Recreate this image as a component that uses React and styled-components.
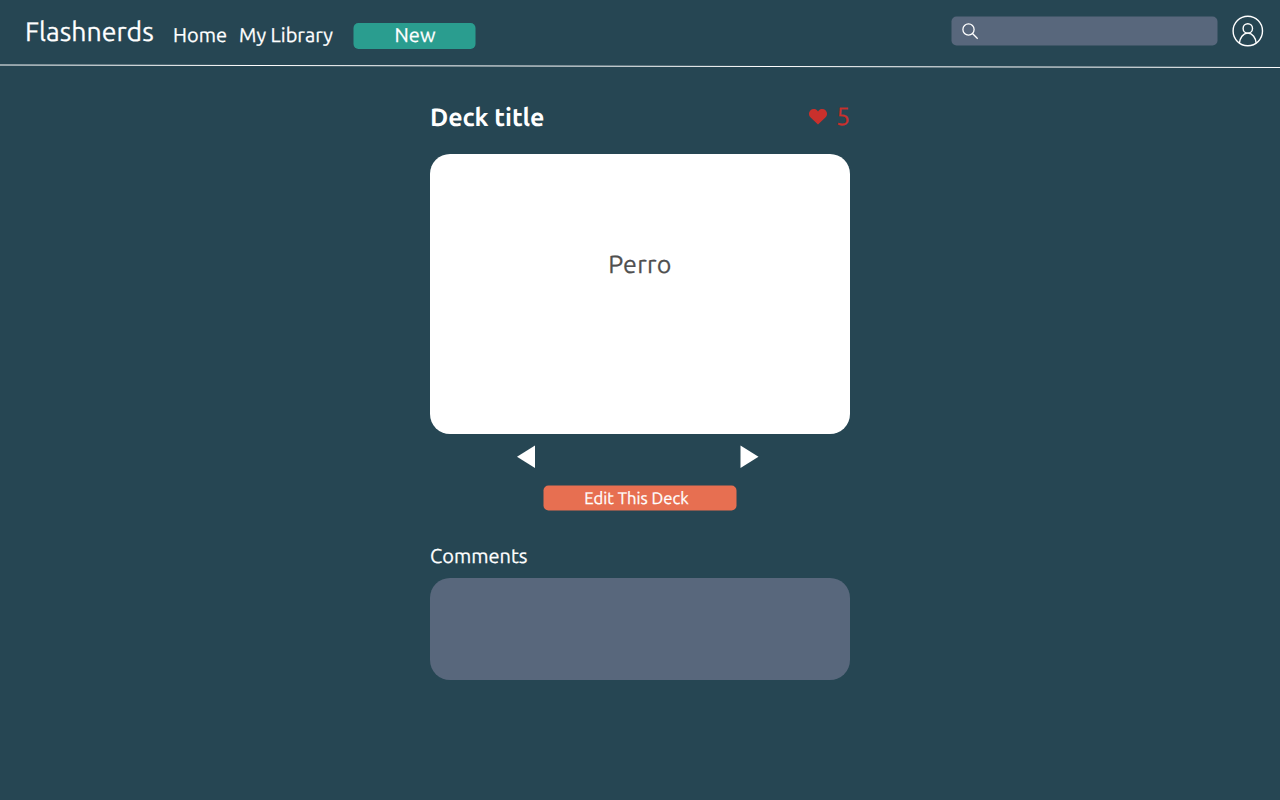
import React from "react";
import styled, { createGlobalStyle } from "styled-components";

const GlobalStyle = createGlobalStyle`
  * { box-sizing: border-box; }
  body {
    margin: 0;
    background: #264653;
    color: #fff;
    font-family: Ubuntu, "Noto Sans", sans-serif;
    text-rendering: geometricPrecision;
    -webkit-text-stroke: 0.25px currentColor;
  }
`;

const Page = styled.div`
  height: 800px;
  overflow: hidden;
`;

const Header = styled.header`
  display: flex;
  align-items: flex-start;
  height: 64px;
  padding: 15px 16px 0 25px;
`;

const Brand = styled.div`
  width: 148px;
  padding-top: 1px;
  font-size: 26.67px;
  line-height: 32px;
  white-space: nowrap;
`;

const Nav = styled.nav`
  display: flex;
  padding-top: 7px;
`;

const NavLink = styled.a`
  width: ${(p) => p.$width}px;
  font-size: 20px;
  line-height: 26px;
  white-space: nowrap;
`;

const Button = styled.button`
  display: block;
  width: ${(p) => p.$width}px;
  height: ${(p) => p.$height}px;
  margin: ${(p) => p.$margin};
  padding: 0;
  border: 0;
  border-radius: 5px;
  background: ${(p) => p.$color};
  color: #fff;
  font-family: inherit;
  font-size: ${(p) => p.$size}px;
  text-rendering: inherit;
  transform: translate(-0.5px, ${(p) => p.$lift || 0}px);
`;

const ButtonLabel = styled.span`
  display: block;
  height: 100%;
  padding: ${(p) => p.$padding};
  line-height: ${(p) => p.$line}px;
`;

const SearchBox = styled.div`
  display: flex;
  align-items: center;
  width: 266px;
  height: 29px;
  margin: 2px 14px 0 auto;
  padding: 1px 0 0 10px;
  border-radius: 5px;
  background: #58677c;
  transform: translate(-0.5px, -0.5px);
`;

const Avatar = styled.svg`
  display: block;
  width: 32px;
  height: 32px;
`;

const Divider = styled.svg`
  display: block;
  width: 100%;
  height: 5px;
`;

const Deck = styled.main`
  width: 420px;
  margin: 0 auto;
`;

const DeckHeader = styled.div`
  display: flex;
  justify-content: space-between;
  align-items: flex-start;
  height: 85px;
  padding-top: 32px;
`;

const Title = styled.h1`
  margin: 0;
  font-size: 25px;
  font-weight: 700;
  line-height: 33px;
  letter-spacing: -0.1px;
  -webkit-text-stroke: 0;
`;

const Likes = styled.div`
  display: flex;
  align-items: flex-start;
  gap: 8px;
  color: #c9302c;
  font-size: 25px;
  line-height: 30px;
`;

const Heart = styled.svg`
  display: block;
  width: 20px;
  height: 18px;
  margin-top: 7px;
`;

const Card = styled.section`
  display: flex;
  justify-content: center;
  height: 280px;
  padding-top: 94px;
  border-radius: 20px;
  background: #fff;
  color: #4f4f4f;
  font-size: 25px;
  line-height: 32px;
  letter-spacing: 0.3px;
`;

const Controls = styled.div`
  display: flex;
  justify-content: space-between;
  height: 52px;
  padding: 11px 92px 0 87px;
`;

const Arrow = styled.svg`
  display: block;
  width: 18px;
  height: 24px;
  overflow: visible;
`;

const CommentsTitle = styled.h2`
  margin: 30.5px 0 0;
  font-size: 20px;
  font-weight: 400;
  line-height: 28px;
`;

const CommentsBox = styled.div`
  height: 102px;
  margin-top: 8px;
  border-radius: 20px;
  background: #58677c;
`;

export default function App() {
  return (
    <Page>
      <GlobalStyle />
      <Header>
        <Brand>Flashnerds</Brand>
        <Nav>
          <NavLink $width={66}>Home</NavLink>
          <NavLink $width={115}>My Library</NavLink>
          <Button $width={122} $height={26} $margin="1px 0 0" $size={20} $color="#2a9d8f">
            <ButtonLabel $line={24} $padding="0 0 0 1px">New</ButtonLabel>
          </Button>
        </Nav>
        <SearchBox>
          <svg width="18" height="18" viewBox="0 0 18 18" fill="none" stroke="#fff" strokeWidth="1.3">
            <circle cx="7" cy="7" r="5.6" />
            <path d="M11 11L16.2 16.2" />
          </svg>
        </SearchBox>
        <Avatar viewBox="0 0 32 32" fill="none" stroke="#fff" strokeWidth="1.4">
          <circle cx="15.8" cy="16" r="14.7" />
          <circle cx="15.8" cy="13.4" r="4.7" />
          <path d="M7.4 28.2C7.8 23 11 18.1 15.8 18.1S23.8 23 24.2 28.2" />
        </Avatar>
      </Header>
      <Divider viewBox="0 0 1280 5" preserveAspectRatio="none">
        <path d="M0 1L1280 3.5" stroke="#fff" fill="none" />
      </Divider>
      <Deck>
        <DeckHeader>
          <Title>Deck title</Title>
          <Likes>
            <Heart viewBox="0 0 20 18" fill="currentColor">
              <path d="M10 16.5L2.6 9.6C.5 7.6.3 4.3 2.3 2.4C4.3.6 7.4.7 9.2 2.6L10 3.5L10.8 2.6C12.6.7 15.7.6 17.7 2.4C19.7 4.3 19.5 7.6 17.4 9.6Z" />
            </Heart>
            <span>5</span>
          </Likes>
        </DeckHeader>
        <Card>Perro</Card>
        <Controls>
          <Arrow viewBox="0 0 18 24" fill="#fff"><path d="M18 .5V23L0 11.8Z" /></Arrow>
          <Arrow viewBox="0 0 18 24" fill="#fff"><path d="M.5 .5V23L18.5 11.8Z" /></Arrow>
        </Controls>
        <Button $width={193} $height={25} $margin="0 auto" $size={16.67} $color="#e76f51" $lift={-0.5}>
          <ButtonLabel $line={25} $padding="0 6px 0 0">Edit This Deck</ButtonLabel>
        </Button>
        <CommentsTitle>Comments</CommentsTitle>
        <CommentsBox />
      </Deck>
    </Page>
  );
}
